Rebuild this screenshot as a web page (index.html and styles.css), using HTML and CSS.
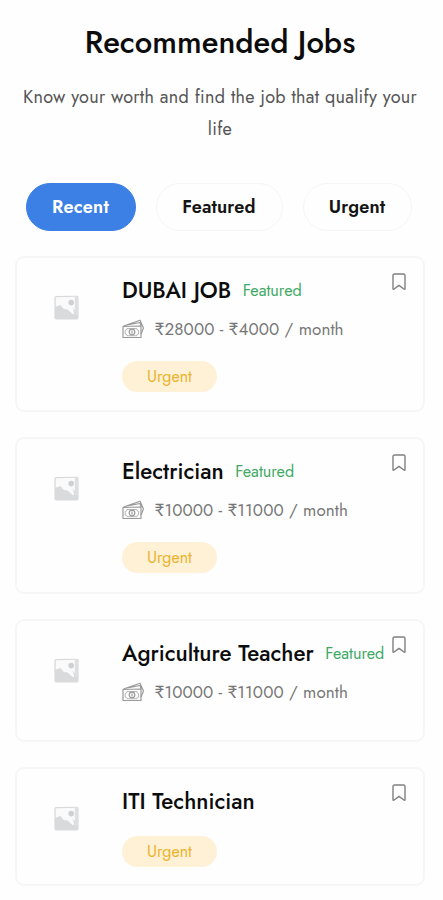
FILE: index.html
```html
<!DOCTYPE html>
<html lang="en">
<head>
<meta charset="utf-8">
<meta name="viewport" content="width=device-width, initial-scale=1">
<title>Recommended Jobs</title>
<link rel="stylesheet" href="styles.css">
</head>
<body>
<svg class="defs" width="0" height="0" aria-hidden="true">
  <symbol id="picture" viewBox="0 0 24 24">
    <path d="M1 2.500q0-1 1-1l20-.3q1 0 1 1V21q0 2-2 2H3q-2 0-2-2z" fill="#fafafa" stroke="#d9d9db" stroke-width="1.200"/>
    <path d="M1 11.500 6 9.500l3.500 4 3.500.5 5 4.500 1.500-1-2-6L19 14l4 1.500V21q0 2-2 2H3q-2 0-2-2z" fill="#d9dadc"/>
    <path d="M20 2h3v17h-3z" fill="#dedfe0"/>
    <circle cx="16.500" cy="7.300" r="2.700" fill="#cfd0d3"/>
  </symbol>
  <symbol id="money" viewBox="0 0 22 20">
    <g fill="none" stroke="#999" stroke-width="1.200" stroke-linejoin="round">
      <path d="M1 7.500 19 7v11.500H1z"/>
      <path d="M1.500 7 18 1.200 21.500 9 19 15M4 6.200 18 3.500l1.200 3.500"/>
      <path d="M3.200 11.500q1.800 0 1.800-2h9.800q0 2 1.800 2V15q-1.800 0-1.800 1.700H5Q5 15 3.200 15z" stroke-width=".7"/>
      <circle cx="10" cy="13" r="2.800"/>
      <path d="M10 11.500v3"/>
    </g>
  </symbol>
  <symbol id="bookmark" viewBox="0 0 14 18">
    <path d="M1 2.500Q1 1 2.500 1h9Q13 1 13 2.500v13q0 1.300-1.100.5L7 12.400 2.100 16Q1 16.800 1 15.500z" fill="none" stroke="#808080" stroke-width="1.400" stroke-linejoin="round"/>
  </symbol>
</svg>
<main class="jobs">
  <h1 class="title">Recommended Jobs</h1>
  <p class="subtitle">Know your worth and find the job that qualify your<br>life</p>
  <nav class="tabs">
    <button class="tab tab-recent active">Recent</button>
    <button class="tab tab-featured">Featured</button>
    <button class="tab tab-urgent">Urgent</button>
  </nav>
  <section class="list">
    <article class="card full">
      <svg class="thumb"><use href="#picture"/></svg>
      <div class="info">
        <h2 class="name"><span>DUBAI JOB</span><span class="featured">Featured</span></h2>
        <p class="salary"><svg class="money"><use href="#money"/></svg><span>₹28000 - ₹4000 / month</span></p>
        <span class="badge">Urgent</span>
      </div>
      <svg class="bookmark"><use href="#bookmark"/></svg>
    </article>
    <article class="card full">
      <svg class="thumb"><use href="#picture"/></svg>
      <div class="info">
        <h2 class="name"><span>Electrician</span><span class="featured">Featured</span></h2>
        <p class="salary"><svg class="money"><use href="#money"/></svg><span>₹10000 - ₹11000 / month</span></p>
        <span class="badge">Urgent</span>
      </div>
      <svg class="bookmark"><use href="#bookmark"/></svg>
    </article>
    <article class="card plain">
      <svg class="thumb"><use href="#picture"/></svg>
      <div class="info">
        <h2 class="name"><span>Agriculture Teacher</span><span class="featured">Featured</span></h2>
        <p class="salary"><svg class="money"><use href="#money"/></svg><span>₹10000 - ₹11000 / month</span></p>
      </div>
      <svg class="bookmark"><use href="#bookmark"/></svg>
    </article>
    <article class="card short">
      <svg class="thumb"><use href="#picture"/></svg>
      <div class="info">
        <h2 class="name"><span>ITI Technician</span></h2>
        <span class="badge">Urgent</span>
      </div>
      <svg class="bookmark"><use href="#bookmark"/></svg>
    </article>
  </section>
</main>
</body>
</html>
```
FILE: styles.css
```css
* { box-sizing: border-box; }
body {
  margin: 0;
  background: #fefefe;
  color: #0c0c0c;
  font-family: Jost, Lato, "Open Sans", sans-serif;
}
.defs { display: none; }
.jobs { width: 440px; padding: 22px 15px 0; }
h1, h2, p { margin: 0; font-weight: 400; white-space: nowrap; }
.title {
  line-height: 42px;
  font-size: 31px;
  font-weight: 500;
  text-align: center;
}
.subtitle {
  margin: 17px -10px 0;
  font-size: 18px;
  line-height: 32px;
  letter-spacing: .27px;
  text-align: center;
  color: #555;
}
.tabs { display: flex; gap: 20px; margin: 38px 0 0 11px; }
.tab {
  height: 48px;
  padding: 0 1px 0 0;
  border: 1px solid #f5f5f6;
  border-radius: 24px;
  background: #fefefe;
  color: #151515;
  font: 600 18.200px/44px Jost, Lato, sans-serif;
  letter-spacing: .15px;
}
.tab.active { background: #3c7fe5; border-color: #3c7fe5; color: #fff; }
.tab-recent { width: 110px; }
.tab-featured { width: 127px; }
.tab-urgent { width: 109px; }
.list { display: grid; gap: 25px; margin-top: 24.500px; }
.card {
  position: relative;
  display: flex;
  align-items: flex-start;
  border: 2px solid #f6f6f7;
  border-radius: 9px;
  padding: 16px 0 0 37px;
}
.full { height: 156.500px; }
.plain { height: 123px; }
.short { height: 119px; }
.thumb { flex: none; width: 25px; height: 25px; margin-top: 21px; }
.info { margin-left: 43px; }
.name { display: flex; align-items: center; gap: 11.500px; height: 32px; font-size: 22.350px; font-weight: 500; }
.featured { font-size: 16.200px; font-weight: 400; color: #3fa965; padding-top: 1px; }
.salary { display: flex; align-items: center; height: 24px; margin-top: 11px; font-size: 17px; letter-spacing: .1px; color: #777; }
.money { width: 22px; height: 20px; margin-right: 10.500px; }
.badge {
  display: flex;
  justify-content: center;
  width: 95px;
  height: 31px;
  margin-top: 20px;
  border-radius: 16px;
  background: #fef1d6;
  color: #ebb32c;
  font-size: 16px;
  line-height: 31px;
}
.short .badge { margin-top: 19px; }
.bookmark { position: absolute; top: 15px; right: 17px; width: 14px; height: 18px; }
```
